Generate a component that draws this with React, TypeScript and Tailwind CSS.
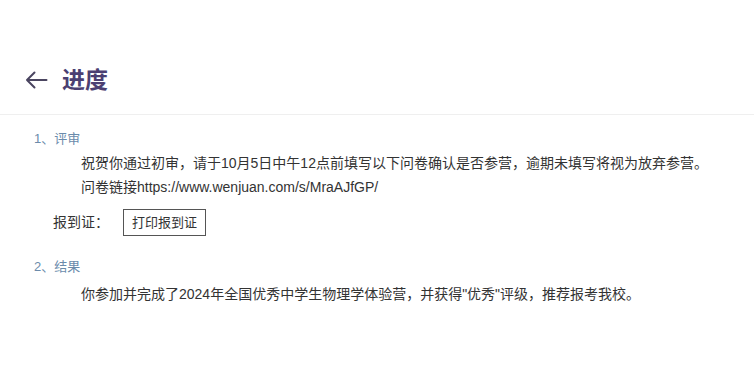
export default function App() {
  const font = { fontFamily: '"Liberation Sans", "Noto Sans CJK SC", sans-serif' };
  return (
    <div className="w-[754px] h-[377px] bg-white text-[14px] text-[#333333]" style={font}>
      {/* header */}
      <div className="pt-[64px] pb-[18px] px-[25px] border-b border-[#efefef]">
        <div className="flex items-center h-[32px] gap-[14px]">
          <svg width="23" height="18" viewBox="0 0 23 18" fill="none" stroke="#4a4560" strokeWidth="2" strokeLinecap="round" strokeLinejoin="round">
            <path d="M21.5 9H2M9.5 1.5L2 9l7.5 7.5" />
          </svg>
          <h1 className="text-[23px] font-bold text-[#4b3f72] leading-none">进度</h1>
        </div>
      </div>

      <div className="pl-[34px] pt-[12px]">
        {/* 1 */}
        <div className="leading-[24px] text-[13px] text-[#6b8bab]">1、评审</div>
        <div className="pl-[47px] leading-[24px]">
          <p>祝贺你通过初审，请于10月5日中午12点前填写以下问卷确认是否参营，逾期未填写将视为放弃参营。</p>
          <p>问卷链接https://www.wenjuan.com/s/MraAJfGP/</p>
        </div>
        <div className="flex items-center mt-[10px] pl-[19px]">
          <span className="w-[70px]">报到证：</span>
          <button className="h-[27px] px-[8px] border border-[#555555] text-[13px] text-[#333333] bg-white" style={font}>
            打印报到证
          </button>
        </div>

        {/* 2 */}
        <div className="mt-[19px] leading-[24px] text-[13px] text-[#6b8bab]">2、结果</div>
        <div className="pl-[47px] mt-[3px] leading-[24px]">
          <p>你参加并完成了2024年全国优秀中学生物理学体验营，并获得"优秀"评级，推荐报考我校。</p>
        </div>
      </div>
    </div>
  );
}
